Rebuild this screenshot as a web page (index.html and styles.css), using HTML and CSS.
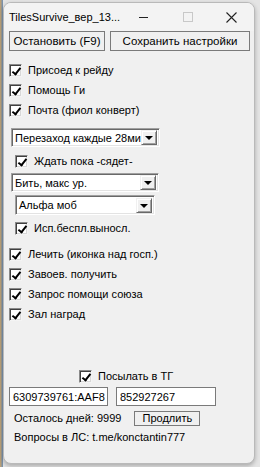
FILE: index.html
```html
<!DOCTYPE html>
<html>
<head>
	<title>TilesSurvive</title>
	<link rel="stylesheet" href="styles.css">
</head>
<body>
	<div class="window">
		<div class="titlebar">
			<span class="title">TilesSurvive_вер_13...</span>
			<span class="ctl min"></span>
			<span class="ctl max"></span>
			<span class="ctl close">
				<svg width="11" height="11" viewBox="0 0 11 11"><path d="M0.5 0.5 L10.5 10.5 M10.5 0.5 L0.5 10.5" stroke="#222" stroke-width="1.1" fill="none"/></svg>
			</span>
		</div>

		<div class="btnrow">
			<div class="btn stop">Остановить (F9)</div>
			<div class="btn save">Сохранить настройки</div>
		</div>

		<div class="cb first"><span class="box"></span>Присоед к рейду</div>
		<div class="cb"><span class="box"></span>Помощь Ги</div>
		<div class="cb"><span class="box"></span>Почта (фиол конверт)</div>

		<div class="combo c1"><span class="val">Перезаход каждые 28ми</span><span class="arrow"></span></div>
		<div class="cb sub wait"><span class="box"></span>Ждать пока -сядет-</div>
		<div class="combo c2"><span class="val">Бить, макс ур.</span><span class="arrow"></span></div>
		<div class="combo c3"><span class="val">Альфа моб</span><span class="arrow"></span></div>
		<div class="cb sub free"><span class="box"></span>Исп.беспл.выносл.</div>

		<div class="cb heal"><span class="box"></span>Лечить (иконка над госп.)</div>
		<div class="cb"><span class="box"></span>Завоев. получить</div>
		<div class="cb"><span class="box"></span>Запрос помощи союза</div>
		<div class="cb"><span class="box"></span>Зал наград</div>

		<div class="cb tg"><span class="box"></span>Посылать в ТГ</div>
		<div class="inputs">
			<div class="field f1">6309739761:AAF8</div>
			<div class="field f2">852927267</div>
		</div>
		<div class="days">
			<span>Осталось дней: 9999</span>
			<div class="btn small">Продлить</div>
		</div>
		<div class="contact">Вопросы в ЛС: t.me/konctantin777</div>
	</div>
</body>
</html>
```

FILE: styles.css
```css
body{
	margin: 0;
	padding: 0;
	width: 260px;
	height: 467px;
	overflow: hidden;
	background: linear-gradient(to right, #c9a36a 0, #6d8fb8 3px, #e4e4e4 3px);
	font-family: 'Liberation Sans', Arial, sans-serif;
	font-size: 11px;
	color: #000;
}
.window{
	margin: 2px 0 0 3px;
	width: 250px;
	height: 460px;
	background: #f0f0f0;
	border: 1px solid #b9b9b9;
	border-radius: 8px;
	box-shadow: 0 2px 4px rgba(0,0,0,.25);
	overflow: hidden;
}
.titlebar{
	display: flex;
	align-items: center;
	height: 28px;
	padding-left: 5px;
	background: #f3f3f3;
}
.title{
	font-size: 11px;
	width: 114px;
	white-space: nowrap;
}
.ctl{
	display: flex;
	justify-content: center;
	align-items: center;
	width: 45px;
	height: 28px;
}
.min::before{
	content: "";
	width: 9px;
	height: 1px;
	background: #222;
}
.max::before{
	content: "";
	width: 8px;
	height: 8px;
	border: 1px solid #c8c8c8;
}
.btnrow{
	display: flex;
	gap: 5px;
	margin: 0 0 0 5px;
}
.btn{
	display: flex;
	justify-content: center;
	align-items: center;
	height: 18px;
	background: #f0f0f0;
	border: 1px solid #7a7a7a;
	font-size: 11.5px;
	white-space: nowrap;
}
.stop{
	width: 94px;
}
.save{
	width: 138px;
}
.cb{
	display: flex;
	align-items: center;
	height: 20px;
	margin-left: 5px;
	white-space: nowrap;
}
.box{
	position: relative;
	width: 9px;
	height: 9px;
	margin-right: 6px;
	background: #fff;
	border: 1px solid;
	border-color: #8a8a8a #f4f4f4 #f4f4f4 #8a8a8a;
	box-shadow: inset 1px 1px #404040, inset -1px -1px #d8d8d8;
	padding: 1px;
}
.box::after{
	content: "";
	position: absolute;
	left: 4px;
	top: 1px;
	width: 3px;
	height: 7px;
	border: solid #000;
	border-width: 0 2px 2px 0;
	transform: rotate(38deg);
}
.first{
	margin-top: 9px;
}
.sub{
	margin-left: 11px;
}
.wait{
	margin-top: 4px;
}
.free{
	margin-top: 3px;
}
.heal{
	margin-top: 6px;
}
.tg{
	margin: 42px 0 0 75px;
}
.combo{
	display: flex;
	align-items: center;
	height: 17px;
	background: #fff;
	border: 1px solid;
	border-color: #a0a0a0 #fff #fff #a0a0a0;
	box-shadow: inset 1px 1px #696969, inset -1px -1px #e3e3e3;
	padding: 0 2px 0 2px;
	overflow: hidden;
}
.val{
	flex: 1;
	white-space: nowrap;
	padding-left: 1px;
}
.arrow{
	display: flex;
	justify-content: center;
	align-items: center;
	width: 14px;
	height: 13px;
	background: #f0f0f0;
	border: 1px solid;
	border-color: #f0f0f0 #696969 #696969 #f0f0f0;
	box-shadow: inset 1px 1px #fff, inset -1px -1px #a0a0a0;
}
.arrow::before{
	content: "";
	border-left: 4px solid transparent;
	border-right: 4px solid transparent;
	border-top: 4px solid #000;
	margin-top: 1px;
}
.c1{
	width: 143px;
	margin: 8px 0 0 7px;
}
.c2{
	width: 142px;
	margin: 2px 0 0 7px;
}
.c3{
	width: 134px;
	height: 18px;
	margin: 3px 0 0 11px;
}
.inputs{
	display: flex;
	gap: 8px;
	margin: 1px 0 0 5px;
}
.field{
	display: flex;
	align-items: center;
	height: 17px;
	padding: 0 3px;
	background: #fff;
	border: 1px solid #7a7a7a;
	white-space: nowrap;
	font-size: 11px;
}
.f1{
	width: 91px;
}
.f2{
	width: 92px;
}
.days{
	display: flex;
	align-items: center;
	height: 18px;
	margin: 3px 0 0 10px;
}
.small{
	width: 64px;
	height: 13px;
	margin-left: 13px;
	font-size: 11px;
}
.contact{
	display: flex;
	align-items: center;
	height: 18px;
	margin: 1px 0 0 10px;
}
```
